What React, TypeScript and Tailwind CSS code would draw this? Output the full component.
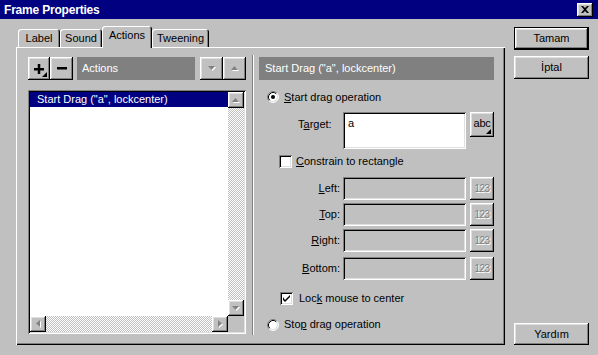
import React from 'react';

const raised = 'shadow-[inset_-1px_-1px_#000,inset_1px_1px_#fff,inset_-2px_-2px_#808080,inset_2px_2px_#dfdfdf]';
const sunken = 'shadow-[inset_1px_1px_#808080,inset_-1px_-1px_#fff,inset_2px_2px_#000,inset_-2px_-2px_#dfdfdf]';

function Radio({ checked }: { checked?: boolean }) {
    return (
        <svg width="12" height="12" viewBox="0 0 12 12" className="shrink-0">
            <circle cx="6" cy="6" r="5" fill="#fff" />
            <path d="M2.11 9.89 A5.5 5.5 0 0 1 9.89 2.11" stroke="#808080" fill="none" />
            <path d="M9.89 2.11 A5.5 5.5 0 0 1 2.11 9.89" stroke="#fff" fill="none" />
            <path d="M2.82 9.18 A4.5 4.5 0 0 1 9.18 2.82" stroke="#000" fill="none" />
            <path d="M9.18 2.82 A4.5 4.5 0 0 1 2.82 9.18" stroke="#dfdfdf" fill="none" />
            {checked && <circle cx="6" cy="6" r="2" fill="#000" />}
        </svg>
    );
}

function Checkbox({ checked }: { checked?: boolean }) {
    return (
        <div className={`w-[13px] h-[13px] bg-white shrink-0 flex items-center justify-center ${sunken}`}>
            {checked && (
                <svg width="7" height="7" viewBox="0 0 7 7">
                    <path d="M0 2 L0 5 L2 7 L7 2 L7 0 L2 5 Z" fill="#000" />
                </svg>
            )}
        </div>
    );
}

function Arrow({ dir, disabled = true }: { dir: 'up' | 'down' | 'left' | 'right'; disabled?: boolean }) {
    const pts = {
        up: '3.5,0 7,4 0,4',
        down: '0,0 7,0 3.5,4',
        left: '4,0 4,7 0,3.5',
        right: '0,0 0,7 4,3.5',
    }[dir];
    const w = dir === 'up' || dir === 'down' ? 8 : 5;
    const h = dir === 'up' || dir === 'down' ? 5 : 8;
    return (
        <svg width={w} height={h} viewBox={`0 0 ${w} ${h}`}>
            {disabled && <polygon points={pts} fill="#fff" transform="translate(1,1)" />}
            <polygon points={pts} fill={disabled ? '#808080' : '#000'} />
        </svg>
    );
}

function ScrollBtn({ dir }: { dir: 'up' | 'down' | 'left' | 'right' }) {
    return (
        <div className={`w-[16px] h-[16px] bg-[#c0c0c0] flex items-center justify-center shrink-0 ${raised}`}>
            <Arrow dir={dir} />
        </div>
    );
}

const track = 'bg-[repeating-conic-gradient(#c0c0c0_0%_25%,#fff_0%_50%)] bg-[length:2px_2px]';

function Field({ label, u, rest, className }: { label?: string; u: string; rest: string; className?: string }) {
    return (
        <div className={`flex h-[23px] ${className ?? ''}`}>
            <div className="w-[84px] text-right pr-[3px] leading-[23px]">
                {label}<span className="underline">{u}</span>{rest}
            </div>
            <div className={`w-[123px] h-full bg-[#c0c0c0] ${sunken}`}></div>
            <div className={`ml-[4px] w-[24px] h-full flex items-center justify-center text-[10px] tracking-[-0.5px] text-[#808080] [text-shadow:1px_1px_0_#fff] ${raised}`}>
                123
            </div>
        </div>
    );
}

export default function App() {
    const tabs = [
        { label: 'Label', w: 'w-[42px]' },
        { label: 'Sound', w: 'w-[42px]' },
        { label: 'Actions', w: 'w-[50px]', active: true },
        { label: 'Tweening', w: 'w-[57px]' },
    ];

    return (
        <div className="w-[598px] h-[355px] bg-[#c0c0c0] overflow-hidden text-[11px] text-black font-['Liberation_Sans',Arial,sans-serif]">
            {/* Title bar */}
            <div className="h-[19px] bg-[#000080] flex items-center justify-between pl-[4px] pr-[5px]">
                <span className="text-white font-bold text-[12px] tracking-[-0.2px]">Frame Properties</span>
                <div className={`w-[16px] h-[14px] bg-[#c0c0c0] flex items-center justify-center ${raised}`}>
                    <svg width="8" height="7" viewBox="0 0 8 7">
                        <path d="M0 0 H2 L4 2 L6 0 H8 L5 3.5 L8 7 H6 L4 5 L2 7 H0 L3 3.5 Z" fill="#000" />
                    </svg>
                </div>
            </div>

            <div className="flex pl-[16px] pt-[7px]">
                {/* Tabs + panel */}
                <div className="w-[489px]">
                    <div className="h-[21px] flex items-end pl-[2px] relative z-10">
                        {tabs.map((t) => (
                            <div
                                key={t.label}
                                className={`${t.w} ${t.active ? 'h-[22px] -mb-[1px] pb-[3px]' : 'h-[18px]'} bg-[#c0c0c0] rounded-t-[3px] flex items-center justify-center shadow-[inset_1px_1px_#fff,inset_-1px_0_#000,inset_-2px_0_#808080]`}
                            >
                                {t.label}
                            </div>
                        ))}
                    </div>
                    <div className="h-[298px] flex pl-[12px] pt-[8px] pb-[10px] shadow-[inset_1px_1px_#fff,inset_-1px_-1px_#000,inset_-2px_-2px_#808080]">
                        {/* Left pane */}
                        <div className="w-[218px] pt-[2px] flex flex-col">
                            <div className="h-[23px] flex">
                                <div className={`w-[22px] h-full relative flex items-center justify-center ${raised}`}>
                                    <svg width="10" height="10" viewBox="0 0 10 10">
                                        <rect x="0" y="4" width="10" height="2.5" fill="#000" />
                                        <rect x="3.75" y="0" width="2.5" height="10" fill="#000" />
                                    </svg>
                                    <svg width="5" height="5" viewBox="0 0 5 5" className="absolute right-[3px] bottom-[3px]">
                                        <polygon points="5,0 5,5 0,5" fill="#000" />
                                    </svg>
                                </div>
                                <div className={`w-[23px] h-full flex items-center justify-center ${raised}`}>
                                    <svg width="10" height="3" viewBox="0 0 10 3">
                                        <rect x="0" y="0" width="10" height="2.5" fill="#000" />
                                    </svg>
                                </div>
                                <div className="ml-[4px] w-[118px] h-full bg-[#808080] text-white flex items-center pl-[5px]">Actions</div>
                                <div className={`ml-[5px] w-[23px] h-full flex items-center justify-center ${raised}`}>
                                    <Arrow dir="down" />
                                </div>
                                <div className={`w-[23px] h-full flex items-center justify-center ${raised}`}>
                                    <Arrow dir="up" />
                                </div>
                            </div>
                            <div className={`mt-[10px] h-[244px] bg-white p-[2px] flex flex-col ${sunken}`}>
                                <div className="flex-1 flex min-h-0">
                                    <div className="flex-1">
                                        <div className="h-[15px] bg-[#000080] text-white pl-[7px] leading-[15px]">Start Drag ("a", lockcenter)</div>
                                    </div>
                                    <div className="w-[16px] flex flex-col">
                                        <ScrollBtn dir="up" />
                                        <div className={`flex-1 ${track}`}></div>
                                        <ScrollBtn dir="down" />
                                    </div>
                                </div>
                                <div className="h-[16px] flex">
                                    <ScrollBtn dir="left" />
                                    <div className={`flex-1 ${track}`}></div>
                                    <ScrollBtn dir="right" />
                                    <div className="w-[16px] bg-[#c0c0c0]"></div>
                                </div>
                            </div>
                        </div>

                        {/* Separator */}
                        <div className="ml-[6px] w-[2px] border-l border-[#808080] bg-white"></div>

                        {/* Right pane */}
                        <div className="ml-[5px] w-[235px] pt-[2px] flex flex-col">
                            <div className="h-[23px] bg-[#808080] text-white flex items-center pl-[6px]">Start Drag ("a", lockcenter)</div>

                            <div className="mt-[10px] h-[14px] flex items-center pl-[8px] gap-[5px]">
                                <Radio checked />
                                <span><span className="underline">S</span>tart drag operation</span>
                            </div>

                            <div className="mt-[8px] flex">
                                <div className="w-[84px] pl-[39px] pt-[4px]">
                                    T<span className="underline">a</span>rget:
                                </div>
                                <div className={`w-[123px] h-[37px] bg-white pl-[5px] pt-[3px] ${sunken}`}>a</div>
                                <div className={`ml-[4px] w-[24px] h-[25px] relative flex items-center justify-center pb-[2px] ${raised}`}>
                                    <span className="text-[11px] tracking-[-0.3px]">abc</span>
                                    <svg width="5" height="5" viewBox="0 0 5 5" className="absolute right-[3px] bottom-[3px]">
                                        <polygon points="5,0 5,5 0,5" fill="#000" />
                                    </svg>
                                </div>
                            </div>

                            <div className="mt-[6px] h-[13px] flex items-center pl-[20px] gap-[4px]">
                                <Checkbox />
                                <span><span className="underline">C</span>onstrain to rectangle</span>
                            </div>

                            <Field className="mt-[9px]" u="L" rest="eft:" />
                            <Field className="mt-[3px]" u="T" rest="op:" />
                            <Field className="mt-[3px]" u="R" rest="ight:" />
                            <Field className="mt-[5px]" u="B" rest="ottom:" />

                            <div className="mt-[12px] h-[13px] flex items-center pl-[21px] gap-[6px]">
                                <Checkbox checked />
                                <span>Loc<span className="underline">k</span> mouse to center</span>
                            </div>

                            <div className="mt-[13px] h-[13px] flex items-center pl-[8px] gap-[5px]">
                                <Radio />
                                <span>Sto<span className="underline">p</span> drag operation</span>
                            </div>
                        </div>
                    </div>
                </div>

                {/* Buttons */}
                <div className="ml-[9px] w-[75px] h-[319px] flex flex-col">
                    <div className="mt-[1px] h-[23px] border border-black">
                        <div className={`h-full flex items-center justify-center ${raised}`}>Tamam</div>
                    </div>
                    <div className={`mt-[6px] h-[23px] flex items-center justify-center ${raised}`}>İptal</div>
                    <div className={`mt-auto h-[22px] flex items-center justify-center ${raised}`}>Yardım</div>
                </div>
            </div>
        </div>
    );
}
